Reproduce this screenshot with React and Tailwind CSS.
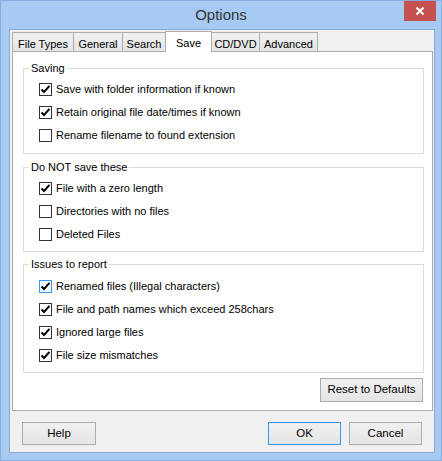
import React from 'react';

const FONT = { fontFamily: '"Liberation Sans", Arial, sans-serif' };

const tabs = [
  { label: 'File Types', w: 'w-[62px]' },
  { label: 'General', w: 'w-[50px]' },
  { label: 'Search', w: 'w-[44px]' },
  { label: 'Save', w: 'w-[47px]', active: true },
  { label: 'CD/DVD', w: 'w-[49px]' },
  { label: 'Advanced', w: 'w-[59px]' },
];

function CheckBox({ checked, focused }) {
  return (
    <span
      className={`w-[13px] h-[13px] shrink-0 bg-white border flex items-center justify-center ${
        focused ? 'border-[#3399ff]' : 'border-[#333333]'
      }`}
    >
      {checked && (
        <svg width="11" height="11" viewBox="0 0 11 11">
          <path d="M1.5 5.5 L4 8 L9.5 1.8" fill="none" stroke="#000" strokeWidth="2" />
        </svg>
      )}
    </span>
  );
}

function Row({ label, checked, focused }) {
  return (
    <div className="h-[23px] flex items-center pl-[15px] gap-[4px]">
      <CheckBox checked={checked} focused={focused} />
      <span className="leading-none">{label}</span>
    </div>
  );
}

// Group box with the caption sitting on the top border
function Group({ title, className, rowsClass, children }) {
  return (
    <div className={`border border-[#dcdcdc] ${className}`}>
      <div className="-mt-[8px] ml-[5px] px-[2px] w-fit bg-white leading-[15px] h-[15px]">{title}</div>
      <div className={rowsClass}>{children}</div>
    </div>
  );
}

function Button({ children, className = '', primary }) {
  return (
    <button
      className={`h-[23px] border bg-gradient-to-b from-[#f0f0f0] to-[#e5e5e5] text-black text-[11.5px] ${
        primary ? 'border-[#3399ff]' : 'border-[#acacac]'
      } ${className}`}
    >
      {children}
    </button>
  );
}

export default function App() {
  return (
    <div
      className="w-[442px] h-[461px] bg-[#a6caf1] border border-[#86ace0] flex flex-col text-[11px] text-black"
      style={FONT}
    >
      {/* Title bar */}
      <div className="h-[28px] shrink-0 relative flex items-center justify-center">
        <span className="text-[15px] text-[#333333] mt-[1px]">Options</span>
        <div className="absolute right-[5px] top-0 w-[32px] h-[20px] bg-[#c75050] flex items-center justify-center">
          <svg width="10" height="10" viewBox="0 0 10 10">
            <path d="M1.5 1.5 L8.5 8.5 M8.5 1.5 L1.5 8.5" stroke="#fff" strokeWidth="2" />
          </svg>
        </div>
      </div>

      {/* Client area */}
      <div className="ml-[8px] mr-[6px] mb-[7px] flex-1 border border-[#8aaad4] bg-[#f0f0f0] flex flex-col">
        {/* Tabs */}
        <div className="mt-[1px] ml-[2px] h-[20px] flex items-end">
          {tabs.map((t, i) =>
            t.active ? (
              <div
                key={t.label}
                className={`${t.w} -ml-px h-[21px] -mb-px relative z-10 bg-white border border-b-0 border-[#acacac] flex justify-center pt-[3px]`}
              >
                {t.label}
              </div>
            ) : (
              <div
                key={t.label}
                className={`${t.w} ${i > 0 ? '-ml-px' : ''} h-[19px] bg-gradient-to-b from-[#f0f0f0] to-[#e5e5e5] border border-b-0 border-[#acacac] flex justify-center pt-[3px]`}
              >
                {t.label}
              </div>
            )
          )}
        </div>

        {/* Tab page */}
        <div className="ml-[2px] mr-[1px] bg-white border border-[#acacac] pl-[10px] pr-[8px] pt-[16px] pb-[8px] flex flex-col">
          <Group title="Saving" className="pb-[6px]" rowsClass="mt-[2px]">
            <Row label="Save with folder information if known" checked />
            <Row label="Retain original file date/times if known" checked />
            <Row label="Rename filename to found extension" />
          </Group>

          <Group title="Do NOT save these" className="mt-[13px] pb-[5px]" rowsClass="mt-[2px]">
            <Row label="File with a zero length" checked />
            <Row label="Directories with no files" />
            <Row label="Deleted Files" />
          </Group>

          <Group title="Issues to report" className="mt-[12px] pb-[5px]" rowsClass="mt-[3px]">
            <Row label="Renamed files (Illegal characters)" checked focused />
            <Row label="File and path names which exceed 258chars" checked />
            <Row label="Ignored large files" checked />
            <Row label="File size mismatches" checked />
          </Group>

          <div className="mt-[5px] flex justify-end pr-[1px]">
            <Button className="w-[103px] h-[24px]">Reset to Defaults</Button>
          </div>
        </div>

        {/* Dialog buttons */}
        <div className="mt-[11px] px-[12px] flex items-center">
          <Button className="w-[74px]">Help</Button>
          <div className="flex-1" />
          <Button className="w-[73px]" primary>OK</Button>
          <Button className="w-[73px] ml-[8px]">Cancel</Button>
        </div>
      </div>
    </div>
  );
}
